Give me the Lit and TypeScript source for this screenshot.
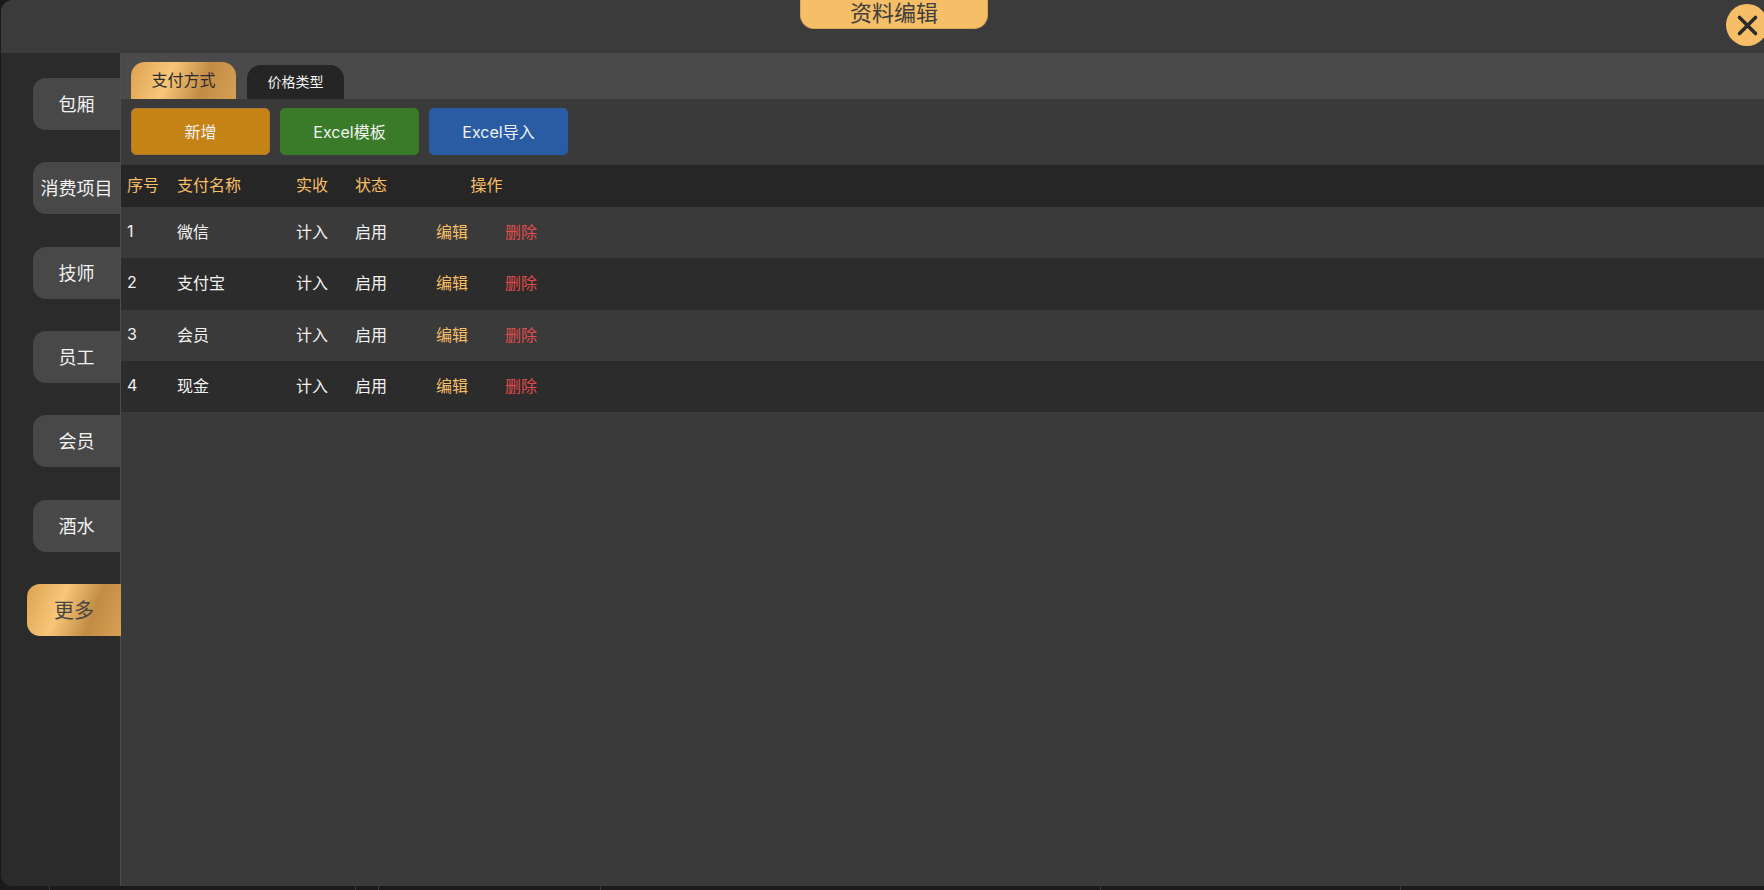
import { LitElement, html, css, svg } from "lit";
import { customElement } from "lit/decorators.js";

const NAV = ["包厢", "消费项目", "技师", "员工", "会员", "酒水", "更多"];
const ROWS = [
  ["1", "微信"],
  ["2", "支付宝"],
  ["3", "会员"],
  ["4", "现金"],
];
const TICKS = [49, 355, 378, 600, 1100, 1400];

@customElement("app-root")
export class AppRoot extends LitElement {
  static styles = css`
    :host {
      display: block;
      width: 1764px;
      height: 890px;
      overflow: hidden;
      position: relative;
      background: #1a1a1a;
      font-family: "Inter", "Noto Sans CJK SC", sans-serif;
      color: #fff;
    }
    .shell {
      margin-left: 1px;
      width: 1763px;
      height: 886px;
      display: flex;
      flex-direction: column;
      border-radius: 12px 0 0 12px;
      overflow: hidden;
      background: #3a3a3a;
    }
    .head {
      height: 53px;
      flex: none;
      background: #3b3b3b;
      display: flex;
      align-items: flex-start;
      padding-left: 799px;
    }
    .title {
      width: 188px;
      height: 29px;
      box-sizing: border-box;
      background: #f6be67;
      border: 1px solid #d9a558;
      border-top: 0;
      border-radius: 0 0 14px 14px;
      color: #3f3f3f;
      font-size: 22px;
      line-height: 26px;
      text-align: center;
    }
    .close {
      position: absolute;
      left: 1726px;
      top: 4px;
      width: 42px;
      height: 42px;
      border-radius: 50%;
      background: #f6be67;
      display: flex;
      align-items: center;
      justify-content: center;
    }
    .close svg {
      width: 42px;
      height: 42px;
      display: block;
    }
    .body {
      flex: 1;
      display: flex;
      min-height: 0;
    }
    .side {
      width: 119px;
      flex: none;
      background: #2b2b2b;
      padding-top: 25px;
      box-sizing: border-box;
      display: flex;
      flex-direction: column;
      align-items: flex-end;
      gap: 32.33px;
    }
    .nav {
      width: 87px;
      height: 52px;
      flex: none;
      box-sizing: border-box;
      padding-bottom: 2px;
      background: #484848;
      border-radius: 13px 0 0 13px;
      font-size: 18px;
      display: flex;
      align-items: center;
      justify-content: center;
      color: #f2f2f2;
      white-space: nowrap;
    }
    .nav.on {
      position: relative;
      width: 94px;
      margin-right: -1px;
      padding: 0 2px 1px 2px;
      color: #444;
      font-size: 20px;
      background: linear-gradient(112deg, #dba24f 0%, #f8c679 36%, #c28c45 68%, #d7a052 100%);
    }
    .main {
      flex: 1;
      min-width: 0;
      background: #3a3a3a;
      border-left: 1px solid #4d4d4d;
      display: flex;
      flex-direction: column;
    }
    .tabs {
      height: 46px;
      flex: none;
      background: #4a4a4a;
      box-sizing: border-box;
      padding-left: 10px;
      display: flex;
      align-items: flex-end;
      gap: 11px;
    }
    .tab {
      border-radius: 14px 14px 0 0;
      display: flex;
      align-items: center;
      justify-content: center;
      box-sizing: border-box;
      padding-bottom: 3px;
    }
    .tab.on {
      width: 105px;
      height: 37px;
      color: #2c2c2c;
      font-size: 16px;
      background: linear-gradient(112deg, #dba24f 0%, #f8c679 36%, #c28c45 68%, #d7a052 100%);
    }
    .tab.off {
      width: 97px;
      height: 34px;
      font-size: 14px;
      padding-bottom: 2px;
      color: #f2f2f2;
      background: #252525;
    }
    .tools {
      height: 66px;
      flex: none;
      box-sizing: border-box;
      padding: 9px 0 0 10px;
      display: flex;
      gap: 10px;
      align-items: flex-start;
    }
    .btn {
      width: 139px;
      height: 47px;
      box-sizing: border-box;
      padding-bottom: 2px;
      border-radius: 5px;
      font-size: 16px;
      display: flex;
      align-items: center;
      justify-content: center;
      color: #f2f2f2;
    }
    .orange {
      background: #c58215;
      border: 1px solid #a97a33;
    }
    .green {
      background: #3a7b29;
    }
    .blue {
      background: #2a5ca3;
    }
    .row {
      display: grid;
      grid-template-columns: 50px 119px 59px 81px 101px;
      box-sizing: border-box;
      padding: 0 0 3px 6px;
      height: 51.25px;
      align-items: center;
      font-size: 16px;
      background: #3a3a3a;
      color: #f2f2f2;
    }
    .row.alt {
      background: #2c2c2c;
    }
    .row.hd {
      height: 42px;
      padding-bottom: 4px;
      background: #262626;
      color: #f6be67;
    }
    .hd .op {
      text-align: center;
    }
    .acts {
      display: flex;
      justify-content: space-between;
    }
    .edit {
      color: #f6be67;
    }
    .del {
      color: #e04b4b;
    }
    .foot {
      position: absolute;
      left: 0;
      right: 0;
      bottom: 0;
      height: 4px;
    }
    .tick {
      position: absolute;
      top: 0;
      width: 1px;
      height: 4px;
      background: #3a3a3a;
    }
  `;

  render() {
    return html`
      <div class="shell">
        <div class="head"><div class="title">资料编辑</div></div>
        <div class="body">
          <div class="side">
            ${NAV.map((n, i) => html`<div class="nav ${i === 6 ? "on" : ""}">${n}</div>`)}
          </div>
          <div class="main">
            <div class="tabs">
              <div class="tab on">支付方式</div>
              <div class="tab off">价格类型</div>
            </div>
            <div class="tools">
              <div class="btn orange">新增</div>
              <div class="btn green">Excel模板</div>
              <div class="btn blue">Excel导入</div>
            </div>
            <div class="row hd">
              <span>序号</span><span>支付名称</span><span>实收</span><span>状态</span><span class="op">操作</span>
            </div>
            ${ROWS.map(
              (r, i) => html`
                <div class="row ${i % 2 ? "alt" : ""}">
                  <span>${r[0]}</span><span>${r[1]}</span><span>计入</span><span>启用</span>
                  <span class="acts"><span class="edit">编辑</span><span class="del">删除</span></span>
                </div>
              `
            )}
          </div>
        </div>
      </div>
      <div class="close">
        <svg viewBox="0 0 42 42">
          ${svg`<path d="M13.5 13.5 L29.5 29.5 M29.5 13.5 L13.5 29.5" stroke="#2b2b2b" stroke-width="3.6" stroke-linecap="round" fill="none"></path>`}
        </svg>
      </div>
      <div class="foot">
        ${TICKS.map((x) => html`<span class="tick" style="left:${x}px"></span>`)}
      </div>
    `;
  }
}
